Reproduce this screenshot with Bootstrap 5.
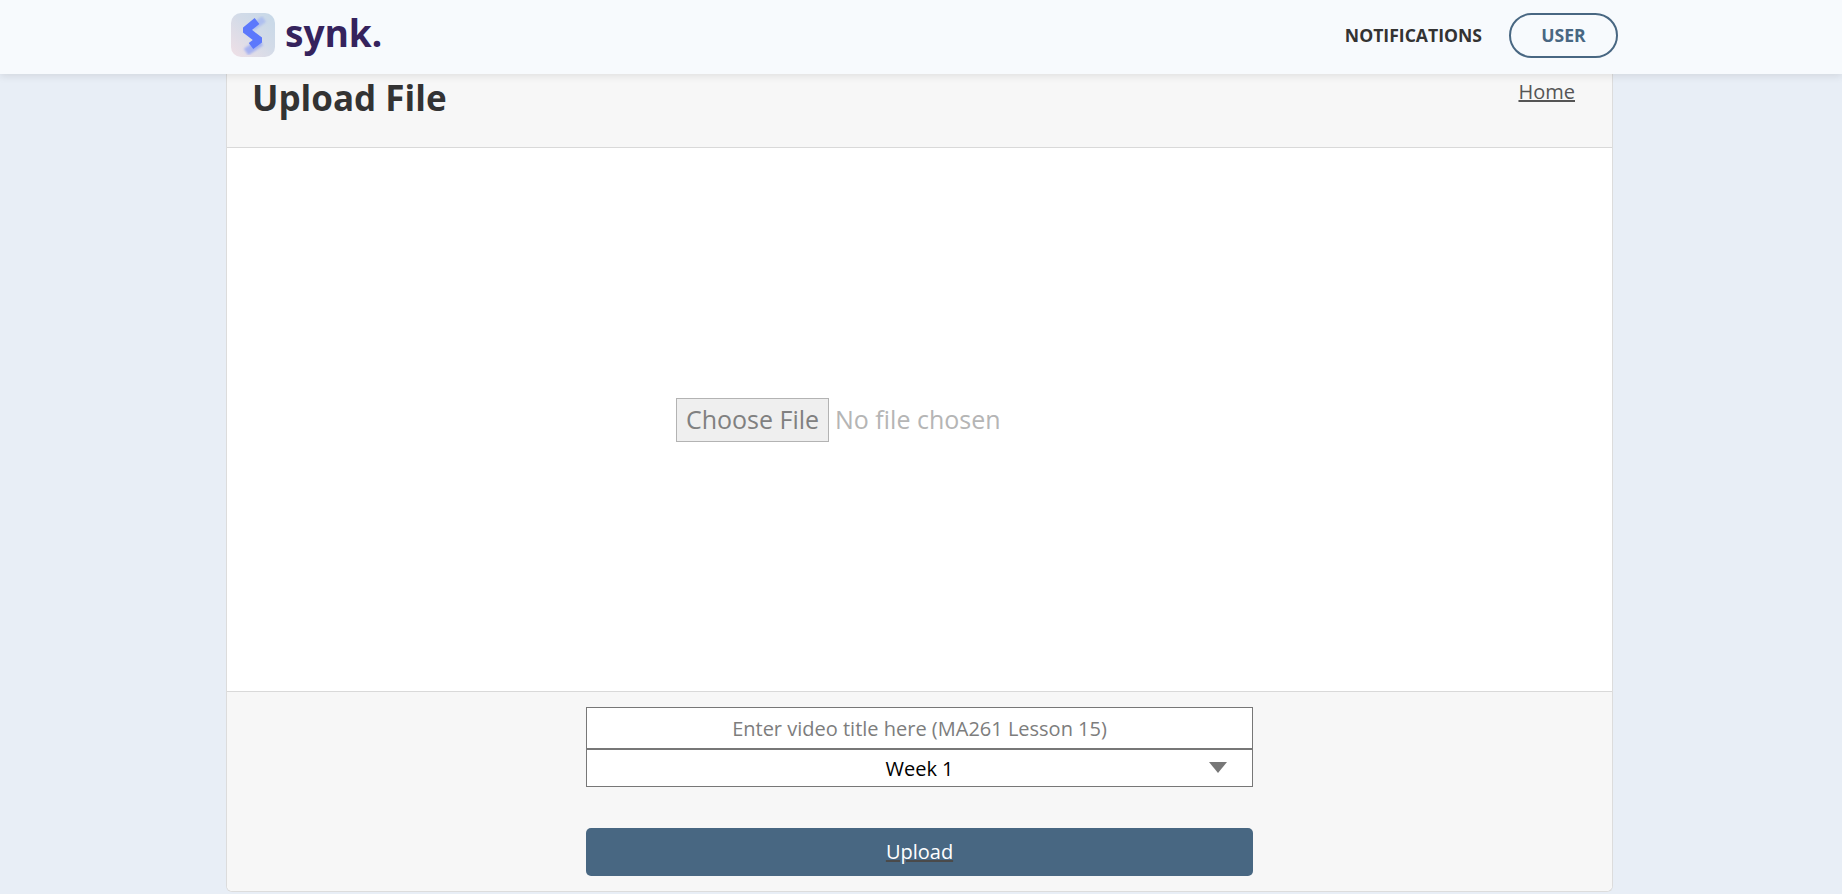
<!DOCTYPE html>
<html lang="en">
<head>
    <meta charset="UTF-8">
    <meta name="viewport" content="width=device-width, initial-scale=1.0">
    <title>Upload File</title>
    <link href="https://cdn.jsdelivr.net/npm/bootstrap@5.3.3/dist/css/bootstrap.min.css" rel="stylesheet">
    <style>
        body { background-color: #e8eef6; font-family: "Open Sans", sans-serif; min-height: 894px; }
        .top-bar { height: 74px; background: #f7fafd; box-shadow: 0 2px 8px rgba(0,0,0,.1); position: relative; z-index: 2; padding: 0 0 4px; }
        .top-inner { width: 1393px; margin-left: 225px; }
        .brand-text { font-family: "Noto Sans", sans-serif; font-weight: 700; font-size: 37px; line-height: 1; color: #35235d; margin-top: -6px; }
        .notif-link { font-size: 17.6px; font-weight: 700; color: #333; text-decoration: none; }
        .user-btn { width: 109px; height: 45px; border: 2px solid #486782; border-radius: 23px; color: #486782; font-size: 17.6px; font-weight: 700; background: transparent; padding: 0; }
        .upload-card { width: 1387px; margin-left: 226px; height: 818px; border-top: 0; border-radius: 0 0 6px 6px; border-color: #dcdcdc; }
        .upload-head { height: 74px; background: #f7f7f7; border-bottom: 1px solid #d9d9d9; padding: 0 37px 0 26px; }
        .upload-head h1 { font-size: 35px; font-weight: 700; color: #333; margin: 2px 0 0 -1px; line-height: 44px; }
        .home-link { font-size: 20px; color: #555; margin-top: 3px; }
        .upload-body { height: 543px; padding-top: 1px; }
        .file-pick { width: 487px; font-size: 25px; color: #b5b5b5; }
        .file-pick::file-selector-button { font-family: inherit; font-size: 25px; color: #808080; background: #efefef; border: 1px solid #b3b3b3; height: 44px; width: 153px; padding: 0; margin-right: 6px; }
        .upload-foot { flex: 1; background: #f7f7f7; border-top: 1px solid #d9d9d9; padding-top: 15px; border-radius: 0 0 6px 6px; }
        .foot-col { width: 667px; }
        .title-input { height: 42px; border: 1px solid #777; border-radius: 0; text-align: center; font-size: 20px; padding: 0; }
        .title-input::placeholder { color: #7d7d7d; opacity: 1; }
        .week-select { height: 38px; border: 1px solid #777; border-radius: 0; text-align: center; font-size: 20px; color: #000; padding: 1px 0 0; background-image: none; }
        .week-wrap::after { content: ""; position: absolute; right: 26px; top: 13px; border-left: 9px solid transparent; border-right: 9px solid transparent; border-top: 11px solid #777; }
        .send-btn { height: 48px; margin-top: 41px; background: #486782; border: 0; border-radius: 5px; color: #fff; font-size: 20px; text-decoration: underline; text-decoration-color: #4a4a4a; padding: 0; }
        .send-btn:hover { background: #486782; color: #fff; }
    </style>
</head>
<body>

<nav class="navbar top-bar">
    <div class="top-inner d-flex align-items-center justify-content-between">
        <a class="d-flex align-items-center text-decoration-none" href="#" style="gap:10px;padding-left:6px">
            <svg width="44" height="44" viewBox="0 0 44 44" aria-hidden="true">
                <defs>
                    <linearGradient id="tile" x1="0" y1="1" x2="1" y2="0">
                        <stop offset="0" stop-color="#f0e0e6"/>
                        <stop offset=".55" stop-color="#d3dbe8"/>
                        <stop offset="1" stop-color="#c6d8e8"/>
                    </linearGradient>
                    <filter id="soft" x="-30%" y="-30%" width="160%" height="160%"><feGaussianBlur stdDeviation="1.3"/></filter>
                    <filter id="edge" x="-20%" y="-20%" width="140%" height="140%"><feGaussianBlur stdDeviation=".4"/></filter>
                </defs>
                <rect width="44" height="44" rx="10" fill="url(#tile)"/>
                <path d="M33 6 21 15" fill="none" stroke="#8fa4f5" stroke-width="7" opacity=".5" filter="url(#soft)"/>
                <path d="M30 29 15 39" fill="none" stroke="#7f95f8" stroke-width="8" opacity=".6" filter="url(#soft)"/>
                <path d="M26 8 15 17 28 27 20 33" fill="none" stroke="#5b78fc" stroke-width="7.500" stroke-linejoin="miter" stroke-miterlimit="8" filter="url(#edge)"/>
            </svg>
            <span class="brand-text">synk.</span>
        </a>
        <div class="d-flex align-items-center" style="gap:27px">
            <a class="notif-link" href="#">NOTIFICATIONS</a>
            <button class="btn user-btn" type="button">USER</button>
        </div>
    </div>
</nav>

<main class="card upload-card">
    <div class="upload-head d-flex justify-content-between align-items-start">
        <h1>Upload File</h1>
        <a class="home-link" href="#">Home</a>
    </div>
    <div class="upload-body d-flex align-items-center justify-content-center">
        <input class="file-pick" type="file">
    </div>
    <div class="upload-foot d-flex justify-content-center">
        <form class="foot-col d-flex flex-column">
            <input class="form-control title-input" type="text" placeholder="Enter video title here (MA261 Lesson 15)">
            <div class="week-wrap position-relative">
                <select class="form-select week-select">
                    <option>Week 1</option>
                    <option>Week 2</option>
                    <option>Week 3</option>
                </select>
            </div>
            <button class="btn send-btn" type="button">Upload</button>
        </form>
    </div>
</main>

<script src="https://cdn.jsdelivr.net/npm/bootstrap@5.3.3/dist/js/bootstrap.bundle.min.js"></script>
</body>
</html>
